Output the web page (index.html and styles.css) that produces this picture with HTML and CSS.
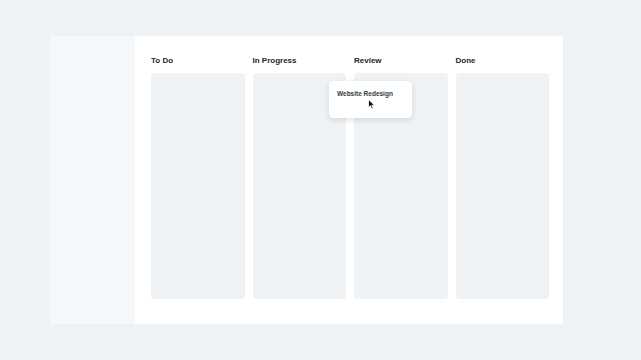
FILE: index.html
```html
<!DOCTYPE html>
<html lang="en">
<head>
    <meta charset="UTF-8">
    <meta name="viewport" content="width=device-width, initial-scale=1.0">
    <title>Board</title>
    <link rel="stylesheet" href="styles.css">
</head>
<body>
    <div class="frame">
        <aside class="sidebar"></aside>
        <main class="board">
            <div class="column">
                <h2>To Do</h2>
                <div class="lane"></div>
            </div>
            <div class="column">
                <h2>In Progress</h2>
                <div class="lane"></div>
            </div>
            <div class="column">
                <h2>Review</h2>
                <div class="lane"></div>
            </div>
            <div class="column">
                <h2>Done</h2>
                <div class="lane"></div>
            </div>
            <div class="card drag">
                <span>Website Redesign</span>
                <svg class="cursor" width="8" height="11" viewBox="0 0 8 11">
                    <path d="M0.5 0.5 L0.5 8.5 L2.5 6.7 L4 10 L5.3 9.4 L3.9 6.2 L6.6 6.2 Z" fill="#111" stroke="#fff" stroke-width="0.8"/>
                </svg>
            </div>
        </main>
    </div>
</body>
</html>
```

FILE: styles.css
```css
body{
    margin: 0;
    background: #eef2f5;
    font-family: "Liberation Sans", Arial, sans-serif;
    width: 641px;
    height: 360px;
    overflow: hidden;
}
.frame{
    display: flex;
    width: 513px;
    height: 288px;
    margin: 36px 0 0 50px;
    background: #fff;
}
.sidebar{
    width: 85px;
    background: #f5f8fa;
}
.board{
    position: relative;
    flex: 1;
    display: grid;
    grid-template-columns: repeat(4, 1fr);
    column-gap: 8px;
    padding: 20px 14px 25px 16px;
}
.column{
    display: flex;
    flex-direction: column;
}
h2{
    margin: 0 0 7px;
    font-size: 8px;
    line-height: 10px;
    font-weight: bold;
    color: #1f262e;
}
.lane{
    flex: 1;
    background: #eff3f6;
    border-radius: 4px;
}
.card{
    background: #fff;
    border-radius: 4px;
    box-shadow: 0 2px 6px rgba(30, 45, 60, 0.14);
    font-size: 6.5px;
    font-weight: bold;
    color: #333944;
}
.drag{
    position: absolute;
    left: 194px;
    top: 45px;
    width: 83px;
    height: 37px;
    padding: 9px 8px;
    box-sizing: border-box;
}
.cursor{
    position: absolute;
    left: 39px;
    top: 18px;
}
```
